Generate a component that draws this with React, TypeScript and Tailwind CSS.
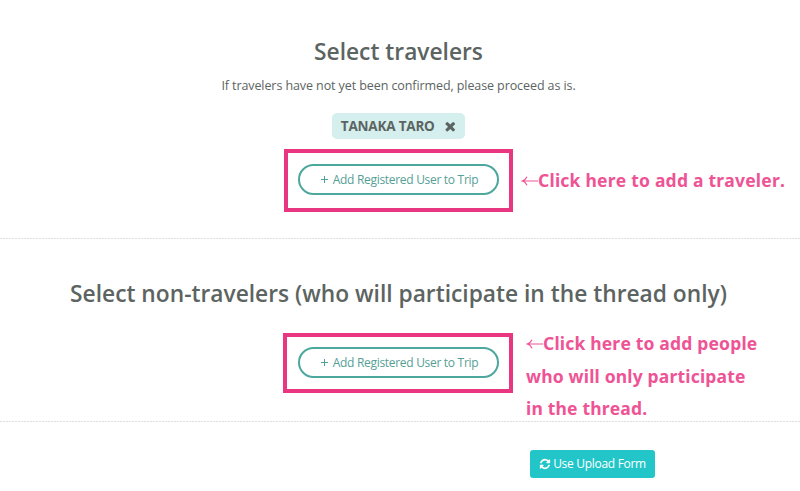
import React from 'react';

function TimesIcon() {
  return (
    <svg viewBox="0 0 1792 1792" className="size-[14.5px] fill-current" aria-hidden="true">
      <path d="M1490 1322q0 40-28 68l-136 136q-28 28-68 28t-68-28l-294-294-294 294q-28 28-68 28t-68-28l-136-136q-28-28-28-68t28-68l294-294-294-294q-28-28-28-68t28-68l136-136q28-28 68-28t68 28l294 294 294-294q28-28 68-28t68 28l136 136q28 28 28 68t-28 68l-294 294 294 294q28 28 28 68z" />
    </svg>
  );
}

function RefreshIcon() {
  return (
    <svg viewBox="0 0 1792 1792" className="size-3 fill-current" aria-hidden="true">
      <path d="M1639 1056q0 5-1 7-64 268-268 434.5t-478 166.5q-146 0-282.5-55t-243.5-157l-129 129q-19 19-45 19t-45-19-19-45v-448q0-26 19-45t45-19h448q26 0 45 19t19 45-19 45l-137 137q71 66 161 102t187 36q134 0 250-65t186-179q11-17 53-117 8-23 30-23h192q13 0 22.5 9.5t9.5 22.5zm25-800v448q0 26-19 45t-45 19h-448q-26 0-45-19t-19-45 19-45l138-138q-148-137-349-137-134 0-250 65t-186 179q-11 17-53 117-8 23-30 23h-199q-13 0-22.5-9.5t-9.5-22.5v-7q65-268 270-434.5t480-166.5q146 0 284 55.5t245 156.5l130-129q19-19 45-19t45 19 19 45z" />
    </svg>
  );
}

function ArrowLeft() {
  return (
    <svg viewBox="0 0 17 12" className="mb-0.5 inline-block h-3 w-[17px] fill-none stroke-current stroke-[1.2]" aria-hidden="true">
      <path d="M17 6H1.5M6 1.8C5 4 3.5 5.4 1.2 6C3.5 6.6 5 8 6 10.2" />
    </svg>
  );
}

function AddUserButton() {
  return (
    <button className="flex h-[31px] w-[201px] items-center justify-center gap-1 rounded-full border-2 border-[#4ca79d] bg-white pl-px text-[12px] tracking-[-0.3px] text-[#55a096]">
      <svg viewBox="0 0 9 9" className="size-[9px] fill-none stroke-current" aria-hidden="true">
        <path d="M4.5 1v7M1 4.5h7" />
      </svg>
      <span>Add Registered User to Trip</span>
    </button>
  );
}

function Divider() {
  return (
    <div className="h-px w-full shrink-0 bg-[repeating-linear-gradient(to_right,#e0e0e0_0_2px,#f8f8f8_2px_3px)]" />
  );
}

export default function App() {
  return (
    <main className="flex h-[491px] w-[800px] flex-col overflow-hidden bg-white font-['Open_Sans',sans-serif] text-[#5c6462]">
      <section className="flex h-[238px] shrink-0 flex-col items-center pr-[3px]">
        <h2 className="mt-9 text-[22.75px] leading-8 font-semibold">Select travelers</h2>
        <p className="mt-2 text-[12.5px] leading-5 tracking-[-0.09px]">
          If travelers have not yet been confirmed, please proceed as is.
        </p>
        <div className="mt-[17px] flex h-[26px] w-[133px] shrink-0 items-center justify-center gap-2 rounded-[5px] bg-[#d5efee] pl-px text-[13.5px] font-bold">
          <span className="tracking-[-0.2px]">TANAKA TARO</span>
          <TimesIcon />
        </div>
        <div className="relative mt-[10px] flex h-[63px] w-[229px] shrink-0 items-center justify-center border-4 border-[#e93681] pb-0.5">
          <AddUserButton />
          <p className="absolute top-[11px] left-[233px] font-['Noto_Sans',sans-serif] text-[17.5px] leading-8 font-bold tracking-[0.22px] whitespace-nowrap text-[#ee5495] [font-kerning:none]">
            <ArrowLeft />
            Click here to add a traveler.
          </p>
        </div>
      </section>
      <Divider />
      <section className="flex h-[182px] shrink-0 flex-col items-center pr-[3px]">
        <h2 className="mt-[39px] text-[22.75px] leading-8 font-semibold">
          Select non-travelers (who will participate in the thread only)
        </h2>
        <div className="relative mt-[23px] mr-px flex h-[60px] w-[230px] shrink-0 items-center justify-center border-4 border-[#e93681] pb-px pl-px">
          <AddUserButton />
          <p className="absolute -top-[10px] left-[239px] font-['Noto_Sans',sans-serif] text-[17.5px] leading-[32.5px] font-bold tracking-[0.18px] whitespace-nowrap text-[#ee5495] [font-kerning:none]">
            <ArrowLeft />
            Click here to add people
            <br />
            who will only participate
            <br />
            in the thread.
          </p>
        </div>
      </section>
      <Divider />
      <footer className="flex pt-7 pl-[530px]">
        <button className="flex h-7 w-[125px] items-center justify-center gap-0.5 rounded-[3px] bg-[#23c6c8] text-[12px] text-white">
          <RefreshIcon />
          <span className="tracking-[-0.3px]">Use Upload Form</span>
        </button>
      </footer>
    </main>
  );
}
